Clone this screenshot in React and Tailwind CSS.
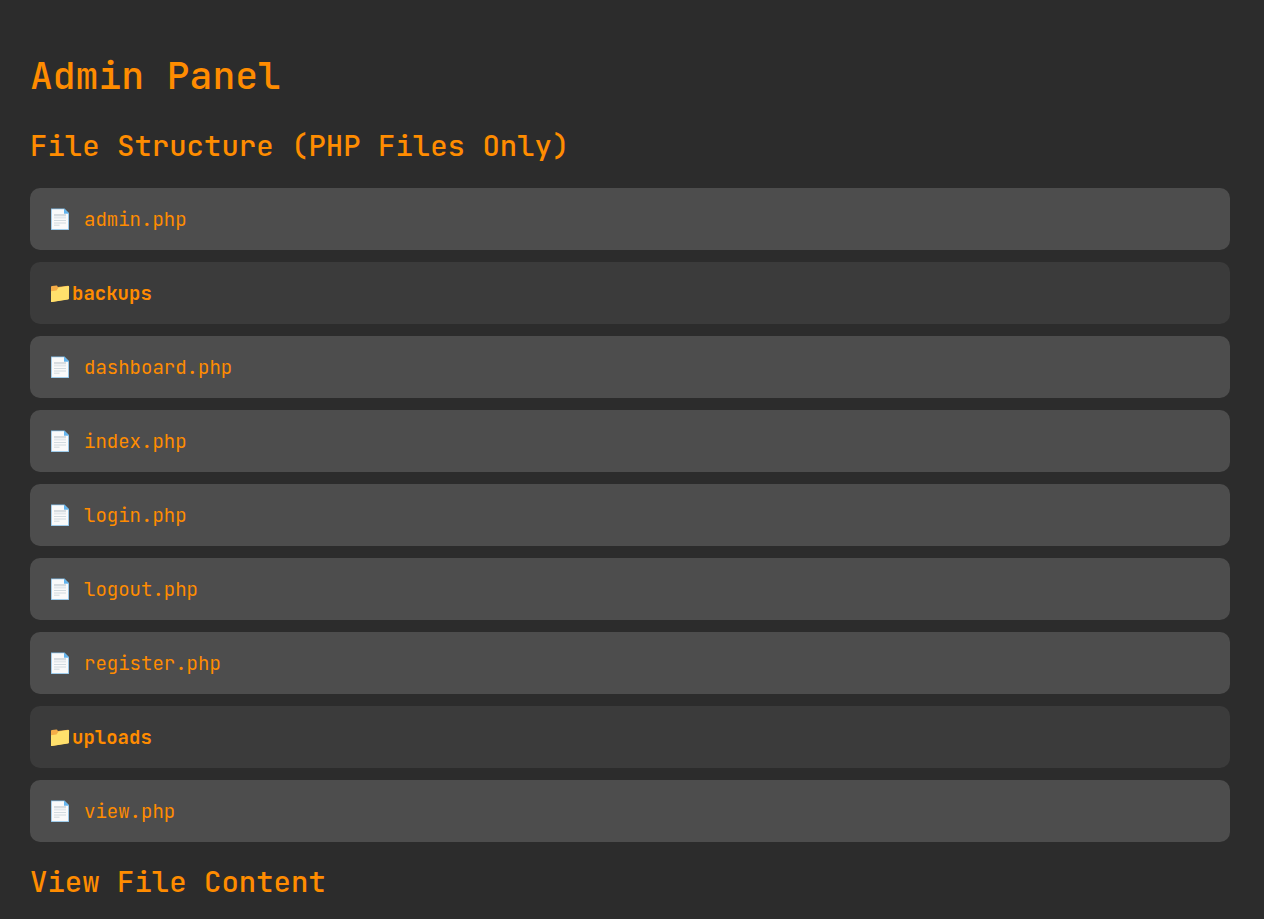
const entries = [
  { name: 'admin.php', type: 'file' },
  { name: 'backups', type: 'folder' },
  { name: 'dashboard.php', type: 'file' },
  { name: 'index.php', type: 'file' },
  { name: 'login.php', type: 'file' },
  { name: 'logout.php', type: 'file' },
  { name: 'register.php', type: 'file' },
  { name: 'uploads', type: 'folder' },
  { name: 'view.php', type: 'file' },
];

function FileIcon() {
  return (
    <svg viewBox="0 0 20 22" className="h-[22px] w-5 shrink-0" aria-hidden="true">
      <path d="M1 0.5H14.5L19 5V22H1Z" fill="#82bce5" />
      <path d="M1.7 1.2H14V5.5H18.2V21.3H1.7Z" fill="#fafafa" />
      <path d="M14 0.8L18.9 5.5H14Z" fill="#62b4ee" />
      <path d="M4 7H16" stroke="#b4bfc7" strokeWidth="1" />
      <path d="M4 9.5H16" stroke="#e4e9ec" strokeWidth="2" />
      <path d="M4 12.5H16M4 15H16M4 17.2H9.5" stroke="#cdd7dd" strokeWidth="0.9" />
    </svg>
  );
}

function FolderIcon() {
  return (
    <svg viewBox="0 -2 20 20" className="size-5 shrink-0" aria-hidden="true">
      <path d="M1 2Q1 1 2 1L6.5 0.6Q7.4 0.6 7.8 2L18 0.7Q19 0.6 19 1.5V14L1.5 17Q1 17 1 16Z" fill="#f5ad48" />
      <path d="M1 6.2L6.5 5.4L8.5 2.6L18.2 0.9Q19.2 0.8 19.1 2L18.8 13.6Q18.8 14.4 18 14.6L2 17.1Q1 17.2 1 16.4Z" fill="#ffe06c" />
    </svg>
  );
}

function Entry({ name, type }) {
  if (type === 'folder') {
    return (
      <li className="flex h-[62px] items-center gap-0.5 rounded-[10px] bg-[#3b3b3b] px-5 font-bold">
        <FolderIcon />
        <span>{name}</span>
      </li>
    );
  }
  return (
    <li className="flex h-[62px] items-center gap-3.5 rounded-[10px] bg-[#4d4d4d] px-5">
      <FileIcon />
      <a href={'?file=' + name}>{name}</a>
    </li>
  );
}

export default function App() {
  return (
    <main className="min-h-screen bg-[#2c2c2c] pt-[50px] pr-[34px] pl-[30px] font-['JetBrains_Mono','DejaVu_Sans_Mono',monospace] text-[#ff8c00]">
      <h1 className="text-[38px] leading-[50px] font-medium">Admin Panel</h1>
      <h2 className="mt-[26px] text-[29px] leading-10 font-medium">File Structure (PHP Files Only)</h2>
      <ul className="mt-[22px] flex flex-col gap-3 text-[19px] leading-[25px]">
        {entries.map((entry) => (
          <Entry key={entry.name} {...entry} />
        ))}
      </ul>
      <h2 className="mt-5 text-[29px] leading-10 font-medium">View File Content</h2>
    </main>
  );
}
